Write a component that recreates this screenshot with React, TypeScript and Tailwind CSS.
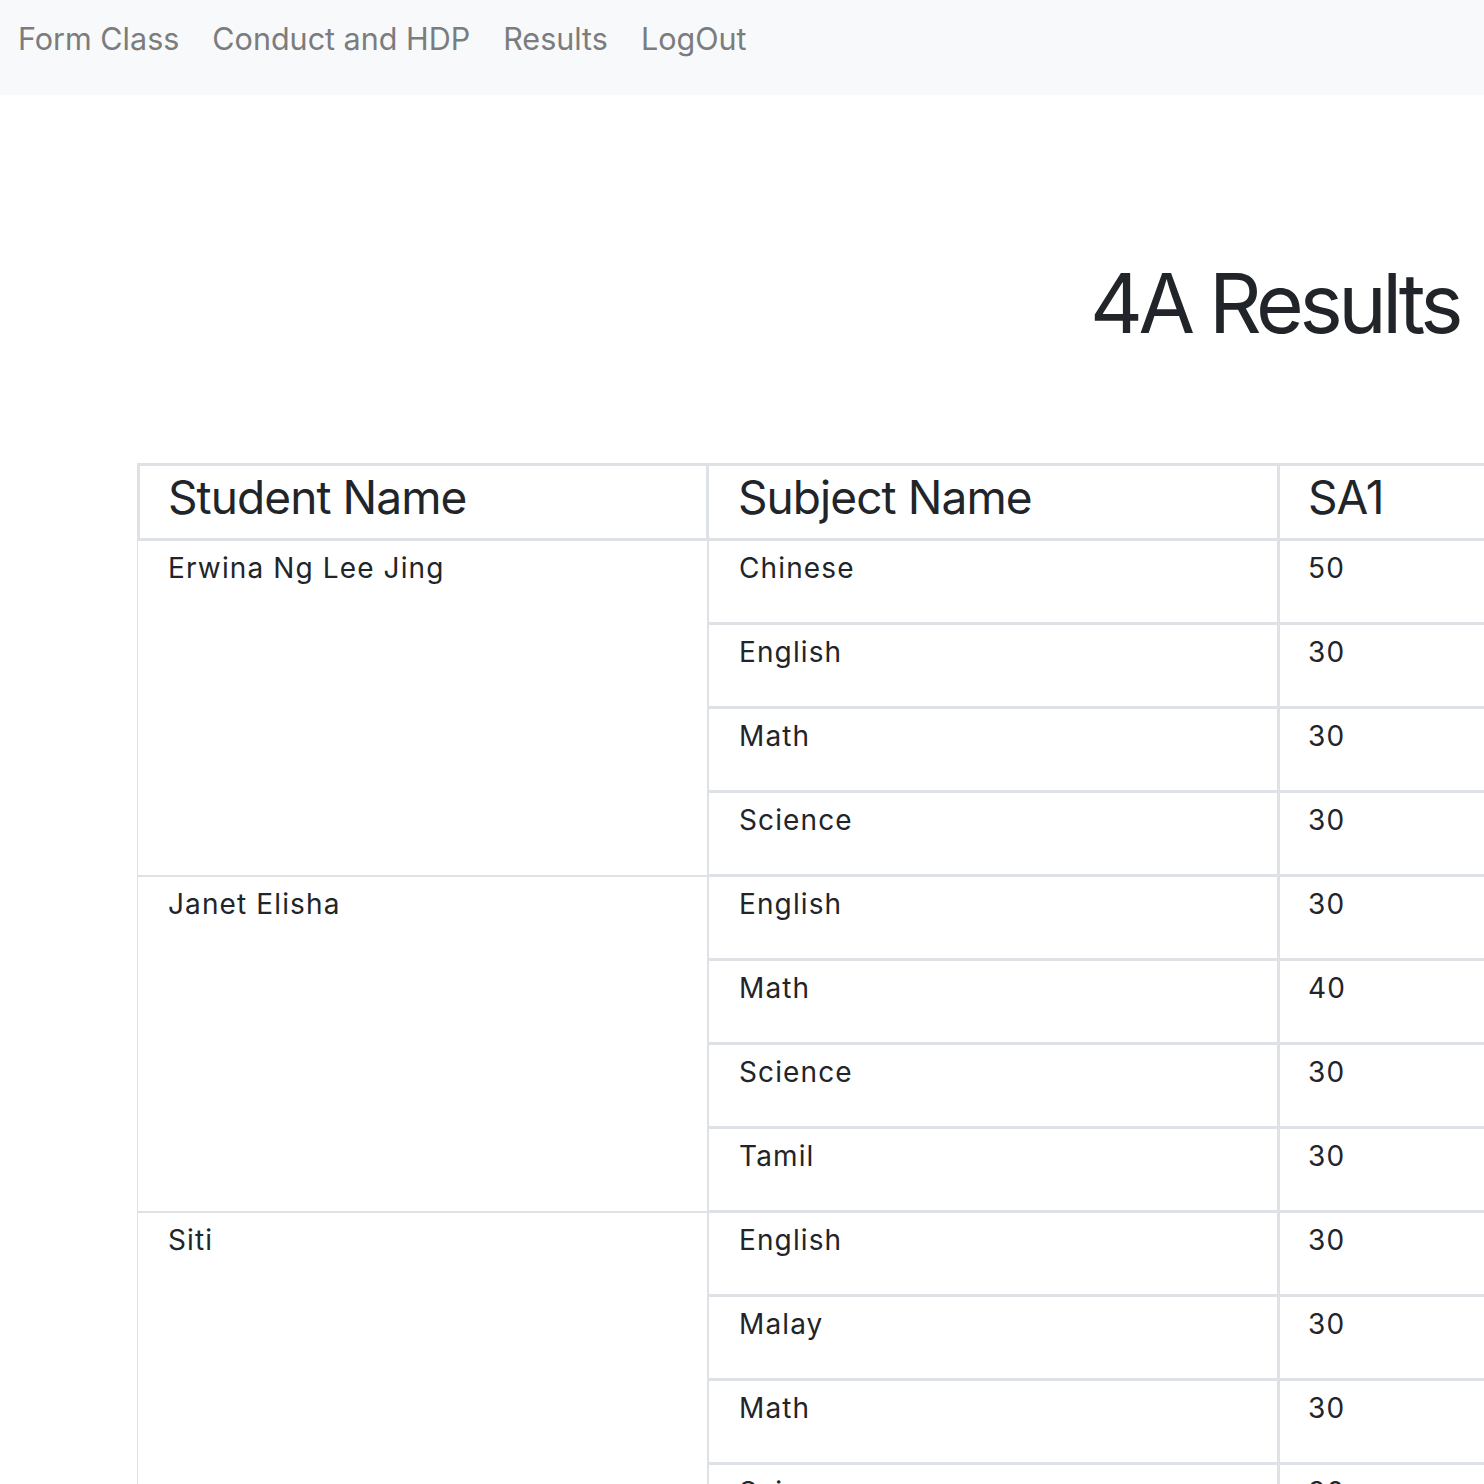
import React from "react";

const data: { name: string; subjects: [string, string][] }[] = [
  {
    name: "Erwina Ng Lee Jing",
    subjects: [
      ["Chinese", "50"],
      ["English", "30"],
      ["Math", "30"],
      ["Science", "30"],
    ],
  },
  {
    name: "Janet Elisha",
    subjects: [
      ["English", "30"],
      ["Math", "40"],
      ["Science", "30"],
      ["Tamil", "30"],
    ],
  },
  {
    name: "Siti",
    subjects: [
      ["English", "30"],
      ["Malay", "30"],
      ["Math", "30"],
      ["Science", "30"],
    ],
  },
];

export default function App() {
  return (
    <div
      className="w-full min-h-screen overflow-hidden bg-white text-[#212529]"
      style={{ fontFamily: "Inter, Roboto, 'Liberation Sans', sans-serif" }}
    >
      <nav className="h-[95px] bg-[#f8f9fa] flex items-start pl-[18px] pt-[16px] gap-[33px] text-[30.5px] leading-[1.5] text-[#7b7c7d]">
        <span>Form Class</span>
        <span>Conduct and HDP</span>
        <span>Results</span>
        <span>LogOut</span>
      </nav>

      <h1 className="mt-[168px] pr-[25px] text-right text-[82px] leading-none font-normal tracking-[-0.055em]">
        4A Results
      </h1>

      <div className="mt-[118px] pl-[137px]">
        <div className="w-[1500px]">
          {/* header */}
          <div className="flex border-t-[3px] border-[#dee2e6] text-[46px] leading-[1.2] tracking-[-0.02em]">
            <div className="w-[572px] h-[75px] border-l-[3px] border-r-[3px] border-b-[3px] border-[#dee2e6] pl-[28px] pt-[4px]">
              Student Name
            </div>
            <div className="w-[571px] h-[75px] border-r-[3px] border-b-[3px] border-[#dee2e6] pl-[29px] pt-[4px]">
              Subject Name
            </div>
            <div className="flex-1 h-[75px] border-r-[3px] border-b-[3px] border-[#dee2e6] pl-[28px] pt-[4px]">
              SA1
            </div>
          </div>
          {/* body */}
          {data.map((s) => (
            <div key={s.name} className="flex text-[28px] leading-[1.5] tracking-[0.04em]">
              <div className="w-[572px] border-l border-r-[2px] border-b-[2px] border-[#dee2e6] pl-[30px] pt-[6px]">
                {s.name}
              </div>
              <div className="flex-1 flex flex-col">
                {s.subjects.map(([sub, sc]) => (
                  <div key={sub} className="flex h-[84px]">
                    <div className="w-[571px] border-r-[3px] border-b-[3px] border-[#dee2e6] pl-[30px] pt-[6px]">
                      {sub}
                    </div>
                    <div className="flex-1 border-r-[3px] border-b-[3px] border-[#dee2e6] pl-[28px] pt-[6px]">
                      {sc}
                    </div>
                  </div>
                ))}
              </div>
            </div>
          ))}
        </div>
      </div>
    </div>
  );
}
